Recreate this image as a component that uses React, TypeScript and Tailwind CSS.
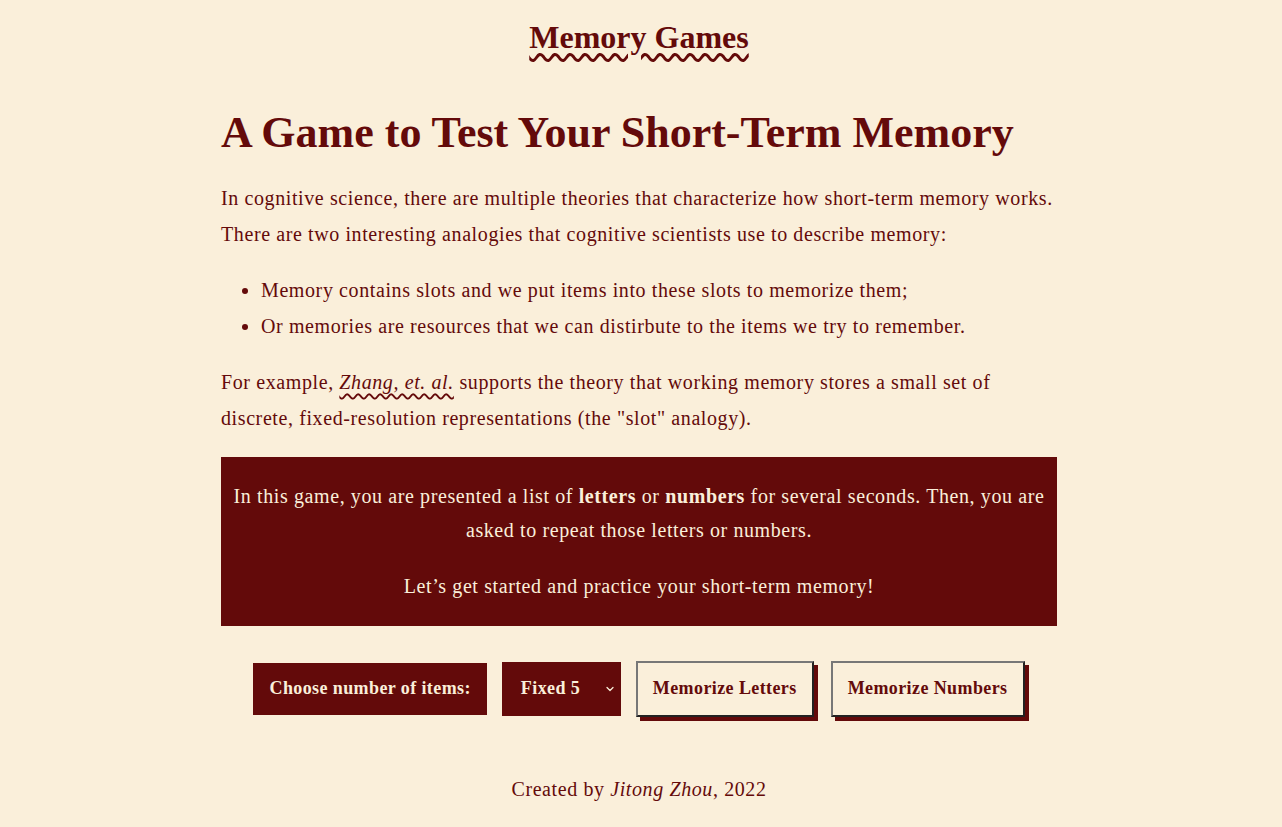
import { ChevronDown } from 'lucide-react';

const serif = "font-['Liberation_Serif',serif]";

export default function App() {
  return (
    <div className={`min-h-[827px] pr-[4px] bg-[#faefda] text-[#640a0a] ${serif}`}>
      {/* Site title */}
      <header className="flex justify-center pt-[14px]">
        <a
          href="#"
          className="text-[32px] font-bold leading-[46px] underline decoration-wavy decoration-[2.5px] underline-offset-[5px]"
        >
          Memory Games
        </a>
      </header>

      <main className="mx-auto w-[836px] pt-[47px] tracking-[0.6px]">
        <h1 className="text-[44px] font-bold leading-[1.2] mb-[20px] tracking-normal">
          A Game to Test Your Short-Term Memory
        </h1>

        <p className="text-[20px] leading-[36px]">
          In cognitive science, there are multiple theories that characterize how short-term memory works.
          There are two interesting analogies that cognitive scientists use to describe memory:
        </p>

        <ul className="list-disc pl-[40px] mt-[20px] text-[20px] leading-[36px]">
          <li>Memory contains slots and we put items into these slots to memorize them;</li>
          <li>Or memories are resources that we can distirbute to the items we try to remember.</li>
        </ul>

        <p className="text-[20px] leading-[36px] mt-[20px]">
          For example,{' '}
          <a href="#" className="italic underline decoration-wavy underline-offset-[4px]">
            Zhang, et. al.
          </a>{' '}
          supports the theory that working memory stores a small set of discrete, fixed-resolution
          representations (the "slot" analogy).
        </p>

        {/* Intro banner */}
        <section className="mt-[21px] bg-[#630a0a] text-[#faefda] text-center text-[20px] leading-[34px] px-[8px] pt-[22px] pb-[23px]">
          <p>
            In this game, you are presented a list of <b>letters</b> or <b>numbers</b> for several
            seconds. Then, you are asked to repeat those letters or numbers.
          </p>
          <p className="mt-[22px]">Let’s get started and practice your short-term memory!</p>
        </section>

        {/* Controls */}
        <div className="flex justify-center items-center gap-[15px] mt-[35px] tracking-[0.4px]">
          <div className="bg-[#630a0a] text-[#faefda] font-bold text-[18px] h-[52px] px-[16px] flex items-center">
            Choose number of items:
          </div>
          <div className="relative bg-[#630a0a] text-[#faefda] font-bold text-[18px] h-[54px] w-[119px] flex items-center pl-[19px]">
            Fixed 5
            <ChevronDown className="absolute right-[5px] top-[21px] w-[12px] h-[12px]" strokeWidth={2.5} />
          </div>
          <button className="h-[56px] px-[15px] bg-[#faefda] text-[#640a0a] font-bold text-[18px] border-2 border-[#777] border-r-[#222] border-b-[#222] shadow-[4px_4px_0_#630a0a]">
            Memorize Letters
          </button>
          <button className="ml-[2px] h-[56px] px-[15px] bg-[#faefda] text-[#640a0a] font-bold text-[18px] border-2 border-[#777] border-r-[#222] border-b-[#222] shadow-[4px_4px_0_#630a0a]">
            Memorize Numbers
          </button>
        </div>

        <footer className="text-center text-[20px] mt-[57px] pb-[20px]">
          Created by <i>Jitong Zhou</i>, 2022
        </footer>
      </main>
    </div>
  );
}
